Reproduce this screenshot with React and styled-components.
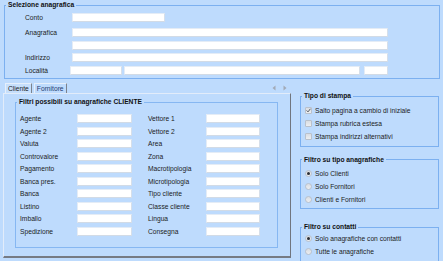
import styled, { createGlobalStyle } from "styled-components";

const Global = createGlobalStyle`
  html, body { margin: 0; padding: 0; background: #bedbfd; }
  * { box-sizing: border-box; }
`;

const Window = styled.div`
  width: 443px;
  height: 261px;
  overflow: hidden;
  background: #bedbfd;
  font-family: "Liberation Sans", Arial, sans-serif;
  font-size: 6.7px;
  color: #1c1c1c;
`;

const Group = styled.fieldset`
  margin: ${(p) => p.$margin || "0"};
  padding: ${(p) => p.$pad || "0"};
  width: ${(p) => p.$w}px;
  border: 1px solid ${(p) => p.$border || "#7cb0f0"};
  min-width: 0;
`;

const Legend = styled.legend`
  margin-left: 1px;
  padding: 0 2px;
  font-weight: bold;
  line-height: 8px;
  height: 8px;
  color: #111;
`;

const TopBody = styled.div`
  padding: 4px 0 3.5px 20px;
  display: flex;
  flex-direction: column;
  gap: 3.5px;
`;

const FormRow = styled.div`
  display: flex;
  align-items: center;
  height: 9px;
  margin-bottom: ${(p) => (p.$extra ? "2.5px" : "0")};
`;

const RowLabel = styled.span`
  width: ${(p) => p.$w || 47}px;
  flex: none;
  line-height: 9px;
  white-space: nowrap;
`;

const Field = styled.div`
  width: ${(p) => p.$w}px;
  height: 9px;
  flex: none;
  margin-right: ${(p) => p.$gap || 0}px;
  background: #fff;
  border: 1px solid #e4ecf6;
  border-bottom-color: #d2dbe6;
  border-right-color: #d6dfea;
`;

const Lower = styled.div`
  display: flex;
  align-items: flex-start;
  margin-top: 1px;
`;

const TabsArea = styled.div`
  margin-left: 3px;
  width: 288px;
`;

const TabStrip = styled.div`
  height: 13px;
  display: flex;
  align-items: flex-end;
  padding-left: 2px;
  gap: 2px;
`;

const Tab = styled.div`
  height: 10px;
  padding: 0 ${(p) => p.$px || 2}px;
  line-height: 10px;
  border: 1px solid #e6effb;
  border-right-color: #7d838d;
  border-bottom: none;
  color: ${(p) => (p.$active ? "#1c1c1c" : "#1f3b6e")};
  background: ${(p) => (p.$active ? "#c6dffc" : "#bedbfd")};
`;

const ScrollArrows = styled.div`
  margin-left: auto;
  margin-right: 4px;
  align-self: center;
  display: flex;
  gap: 7px;
  padding-top: 2px;
`;

const TabPanel = styled.div`
  height: 165px;
  border-top: 1px solid #e2ecfa;
  border-left: 1px solid #e2ecfa;
  border-right: 1px solid #70757e;
  border-bottom: 2px solid #767b84;
  padding: 4px 0 0 11px;
`;

const FilterGrid = styled.div`
  padding: 8px 0 11px 4px;
  display: grid;
  grid-template-columns: 57px 55px 16px 58px 54px;
  grid-auto-rows: 9px;
  row-gap: 3.5px;
  align-items: center;
`;

const Side = styled.div`
  margin-left: 9px;
  display: flex;
  flex-direction: column;
`;

const OptionList = styled.div`
  padding: ${(p) => p.$pad};
  display: flex;
  flex-direction: column;
`;

const Option = styled.div`
  height: ${(p) => p.$h || 13}px;
  display: flex;
  align-items: center;
  padding-left: 4px;
  gap: 3px;
  white-space: nowrap;
`;

const Box = styled.span`
  width: 7px;
  height: 7px;
  flex: none;
  border: 1px solid #b9c1cc;
  background: linear-gradient(#d9dde3, #eceef1);
  border-radius: ${(p) => (p.$round ? "50%" : "1px")};
  display: flex;
  align-items: center;
  justify-content: center;
`;

const Dot = styled.span`
  width: 3px;
  height: 3px;
  border-radius: 50%;
  background: #2b2f36;
`;

const Arrow = ({ dir }) => (
  <svg width="4" height="6" viewBox="0 0 4 6">
    <path d={dir === "l" ? "M3.5 0.5 L0.5 3 L3.5 5.5Z" : "M0.5 0.5 L3.5 3 L0.5 5.5Z"} fill="#a2aab6" />
  </svg>
);

const Check = () => (
  <Box>
    <svg width="5" height="5" viewBox="0 0 5 5">
      <path d="M0.6 2.4 L2 3.9 L4.4 0.8" stroke="#4a4f57" strokeWidth="0.9" fill="none" />
    </svg>
  </Box>
);

const filtri = [
  ["Agente", "Vettore 1"],
  ["Agente 2", "Vettore 2"],
  ["Valuta", "Area"],
  ["Controvalore", "Zona"],
  ["Pagamento", "Macrotipologia"],
  ["Banca pres.", "Microtipologia"],
  ["Banca", "Tipo cliente"],
  ["Listino", "Classe cliente"],
  ["Imballo", "Lingua"],
  ["Spedizione", "Consegna"],
];

export default function App() {
  return (
    <Window>
      <Global />
      <Group $w={436} $margin="1px 0 0 4px">
        <Legend>Selezione anagrafica</Legend>
        <TopBody>
          <FormRow $extra>
            <RowLabel>Conto</RowLabel>
            <Field $w={93} />
          </FormRow>
          <FormRow>
            <RowLabel>Anagrafica</RowLabel>
            <Field $w={316} />
          </FormRow>
          <FormRow>
            <RowLabel />
            <Field $w={316} />
          </FormRow>
          <FormRow>
            <RowLabel>Indirizzo</RowLabel>
            <Field $w={316} />
          </FormRow>
          <FormRow>
            <RowLabel $w={45}>Località</RowLabel>
            <Field $w={52} $gap={2} />
            <Field $w={236} $gap={4} />
            <Field $w={24} />
          </FormRow>
        </TopBody>
      </Group>

      <Lower>
        <TabsArea>
          <TabStrip>
            <Tab $active>Cliente</Tab>
            <Tab>Fornitore</Tab>
            <ScrollArrows>
              <Arrow dir="l" />
              <Arrow dir="r" />
            </ScrollArrows>
          </TabStrip>
          <TabPanel>
            <Group $w={263} $border="#86b7f2">
              <Legend>Filtri possibili su anagrafiche CLIENTE</Legend>
              <FilterGrid>
                {filtri.map(([a, b]) => [
                  <RowLabel key={a + "l"} $w={57}>{a}</RowLabel>,
                  <Field key={a + "f"} $w={55} />,
                  <span key={a + "s"} />,
                  <RowLabel key={b + "l"} $w={58}>{b}</RowLabel>,
                  <Field key={b + "f"} $w={54} />,
                ])}
              </FilterGrid>
            </Group>
          </TabPanel>
        </TabsArea>

        <Side>
          <Group $w={139} $margin="12px 0 0 0">
            <Legend>Tipo di stampa</Legend>
            <OptionList $pad="3.5px 0 3px 0">
              <Option><Check />Salto pagina a cambio di iniziale</Option>
              <Option><Box />Stampa rubrica estesa</Option>
              <Option><Box />Stampa indirizzi alternativi</Option>
            </OptionList>
          </Group>
          <Group $w={139} $margin="9px 0 0 0">
            <Legend>Filtro su tipo anagrafiche</Legend>
            <OptionList $pad="3.5px 0 2px 0">
              <Option><Box $round><Dot /></Box>Solo Clienti</Option>
              <Option><Box $round />Solo Fornitori</Option>
              <Option><Box $round />Clienti e Fornitori</Option>
            </OptionList>
          </Group>
          <Group $w={139} $margin="14px 0 0 0">
            <Legend>Filtro su contatti</Legend>
            <OptionList $pad="1.5px 0 3px 0">
              <Option $h={12.5}><Box $round><Dot /></Box>Solo anagrafiche con contatti</Option>
              <Option $h={12.5}><Box $round />Tutte le anagrafiche</Option>
            </OptionList>
          </Group>
        </Side>
      </Lower>
    </Window>
  );
}
